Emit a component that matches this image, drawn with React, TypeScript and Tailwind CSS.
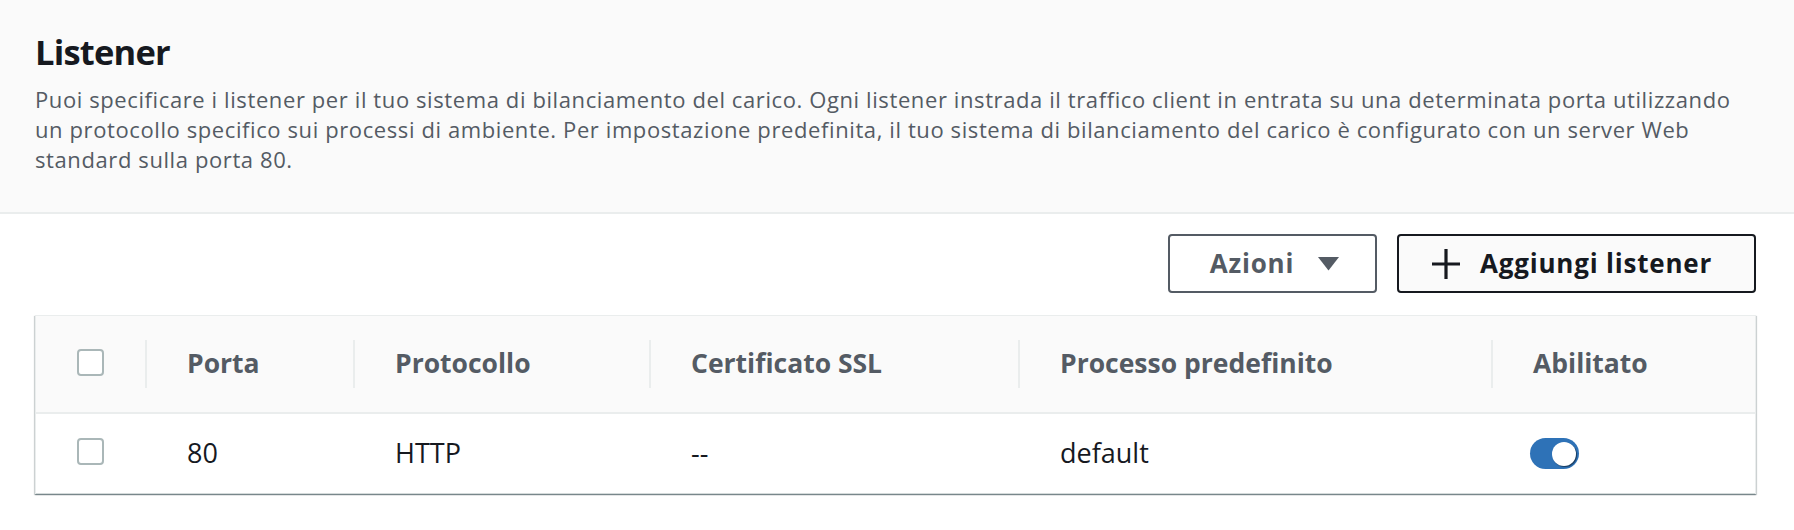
import React from "react";

function Checkbox() {
  return <div className="w-[27px] h-[27px] rounded-[4px] border-2 border-[#aab7b8] bg-white" />;
}

function HeadCell({ label }: { label: string }) {
  return (
    <div className="flex items-center h-full">
      <div className="w-[2px] h-[48px] bg-[#eaeded]" />
      <span className="ml-[40px] font-bold text-[26.5px] text-[#545b64] whitespace-nowrap">{label}</span>
    </div>
  );
}

function BodyCell({ children }: { children: React.ReactNode }) {
  return <div className="flex items-center h-full pl-[42px]">{children}</div>;
}

export default function App() {
  const font = { fontFamily: '"Open Sans", "Noto Sans", Arial, sans-serif' };
  return (
    <div className="w-[1794px] h-[530px] bg-white" style={font}>
      <div className="bg-[#fafafa] border-b-2 border-[#eaeded] pl-[35px] pr-[38px] pt-[32px] h-[214px]">
        <h2 className="text-[34.5px] leading-[40px] tracking-[-0.8px] font-bold text-[#16191f]">Listener</h2>
        <p className="mt-[12px] text-[22px] leading-[30px] tracking-[0.6px] text-[#545b64] max-w-[1721px]">
          Puoi specificare i listener per il tuo sistema di bilanciamento del carico. Ogni listener instrada il traffico client in entrata su una determinata porta utilizzando un protocollo specifico sui processi di ambiente. Per impostazione predefinita, il tuo sistema di bilanciamento del carico è configurato con un server Web standard sulla porta 80.
        </p>
      </div>
      <div className="pl-[35px] pr-[38px]">
        <div className="flex justify-end gap-[20px] mt-[20px]">
          <button className="w-[209px] h-[59px] rounded-[4px] border-2 border-[#545b64] bg-white flex items-center justify-center gap-[24px] pl-[4px]">
            <span className="font-bold text-[26px] tracking-[0.8px] text-[#545b64]">Azioni</span>
            <svg width="21" height="14" viewBox="0 0 21 14">
              <path d="M0 0 H21 L10.5 13.5 Z" fill="#545b64" />
            </svg>
          </button>
          <button className="w-[359px] h-[59px] rounded-[4px] border-2 border-[#16191f] bg-[#fafafa] flex items-center justify-center gap-[20px] pr-[9px]">
            <svg width="28" height="30" viewBox="0 0 28 30">
              <path d="M14 0 V30 M0 15 H28" stroke="#16191f" strokeWidth="3.2" />
            </svg>
            <span className="font-bold text-[26px] tracking-[0.8px] text-[#16191f]">Aggiungi listener</span>
          </button>
        </div>
        <div className="mt-[22px] border border-[#eaeded] border-b-0 shadow-[0_1px_1px_0_rgba(0,28,36,0.35),1px_1px_1px_0_rgba(0,28,36,0.15),-1px_1px_1px_0_rgba(0,28,36,0.15)]">
          <div className="grid grid-cols-[109px_208px_296px_369px_473px_1fr] h-[98px] bg-[#fafafa] border-b-2 border-[#eaeded]">
            <div className="flex items-center h-full pl-[41px] pb-[4px]">
              <Checkbox />
            </div>
            <HeadCell label="Porta" />
            <HeadCell label="Protocollo" />
            <HeadCell label="Certificato SSL" />
            <HeadCell label="Processo predefinito" />
            <HeadCell label="Abilitato" />
          </div>
          <div className="grid grid-cols-[109px_208px_296px_369px_473px_1fr] h-[80px] bg-white text-[27px] text-[#16191f] border-b border-[#d5dbdb]">
            <div className="flex items-center h-full pl-[41px] pb-[4px]">
              <Checkbox />
            </div>
            <BodyCell>80</BodyCell>
            <BodyCell>HTTP</BodyCell>
            <BodyCell>--</BodyCell>
            <BodyCell>default</BodyCell>
            <div className="flex items-center h-full pl-[39px]">
              <div className="w-[49px] h-[31px] rounded-full bg-[#2e72b7] flex items-center justify-end pr-[3px]">
                <div className="w-[24px] h-[24px] rounded-full bg-white shadow-[1px_1px_1px_rgba(0,0,0,0.5)]" />
              </div>
            </div>
          </div>
        </div>
      </div>
    </div>
  );
}
